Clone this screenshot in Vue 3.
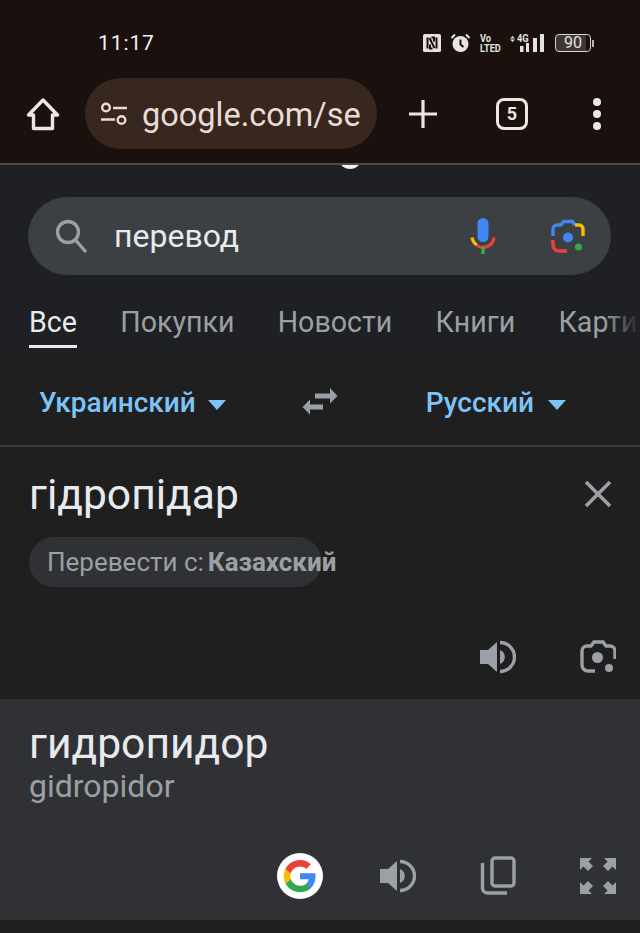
<script setup>
const tabs = ['Все', 'Покупки', 'Новости', 'Книги', 'Карти']
</script>

<template>
  <div class="phone">
    <header class="chrome">
      <div class="status">
        <span class="time">11:17</span>
        <div class="status-icons">
          <svg width="18" height="18" viewBox="0 0 18 18">
            <rect width="18" height="18" rx="1.5" fill="#e4e1df" />
            <path d="M4.5 3.5v11M13.5 3.500v11M6.500 4l5 10M8.500 3.500h2.500v4M9.500 14.500H7v-4" stroke="#1a110e" stroke-width="2" fill="none" />
          </svg>
          <svg width="21" height="20" viewBox="0 0 21 20">
            <circle cx="10.500" cy="11" r="8" fill="#e8e6e3" />
            <path d="M10.500 6.500V11.500l3 2.500" stroke="#1a110e" stroke-width="2" fill="none" />
            <path d="M1.500 5 5 1.500M19.500 5 16 1.500" stroke="#e8e6e3" stroke-width="2" />
          </svg>
          <div class="volte">
            <span>Vo</span>
            <span>LTED</span>
          </div>
          <div class="signal">
            <span class="net">4G</span>
            <svg width="35" height="18" viewBox="0 0 35 18">
              <path d="M0 4.500h5L2.500 2ZM0 5.500h5L2.500 8Z" fill="#e4e1df" />
              <rect x="10" y="12" width="3.500" height="6" fill="#e4e1df" />
              <rect x="16" y="9" width="3" height="9" fill="#e4e1df" />
              <rect x="23" y="4" width="4" height="14" fill="#e4e1df" />
              <rect x="30" y="0" width="4" height="18" fill="#e4e1df" />
            </svg>
          </div>
          <div class="battery">
            <div class="cell"><span>90</span></div>
            <i class="nub"></i>
          </div>
        </div>
      </div>
      <div class="toolbar">
        <svg width="36" height="36" viewBox="0 0 36 36">
          <path d="M18 4 3.500 19H8.500V32.500H27.500V19H32.500Z" fill="none" stroke="#efe6e2" stroke-width="3.400" stroke-linejoin="round" />
        </svg>
        <div class="url">
          <svg width="28" height="24" viewBox="0 0 28 24">
            <g fill="none" stroke="#e8dcd7" stroke-width="2.400">
              <circle cx="6" cy="5.500" r="3.800" />
              <path d="M13 6h14M1 17.500h14" />
              <circle cx="21.500" cy="18" r="3.800" />
            </g>
          </svg>
          <span class="url-text">google.com/se</span>
        </div>
        <svg class="plus" width="30" height="30" viewBox="0 0 30 30">
          <path d="M15 1v28M1 15h28" stroke="#efe6e2" stroke-width="3.200" />
        </svg>
        <div class="tab-count">5</div>
        <div class="dots"><i></i><i></i><i></i></div>
      </div>
    </header>

    <section class="search-area">
      <i class="peek"></i>
      <div class="search">
        <svg width="34" height="38" viewBox="0 0 34 38">
          <circle cx="14" cy="15" r="10.500" fill="none" stroke="#9aa0a6" stroke-width="3.400" />
          <path d="M21.500 23 32 35" stroke="#9aa0a6" stroke-width="3.400" />
        </svg>
        <span class="query">перевод</span>
        <svg class="mic" width="26" height="36" viewBox="0 0 26 36">
          <rect x="7.500" y="0" width="11" height="24" rx="5.500" fill="#4285f4" />
          <path d="M2 19.500a11 11 0 0 0 5 7.500" fill="none" stroke="#fbbc04" stroke-width="3.200" />
          <path d="M7 27.500a11 11 0 0 0 17-8" fill="none" stroke="#ea4335" stroke-width="3.200" />
          <rect x="11.300" y="29" width="3.400" height="7" fill="#34a853" />
        </svg>
        <svg class="lens" width="34" height="34" viewBox="0 0 34 34">
          <path d="M2 17V10a4 4 0 0 1 4-4h4l2.500-3.500h9L24 6" fill="none" stroke="#4285f4" stroke-width="3.400" stroke-linejoin="round" />
          <path d="M24 6h4a4 4 0 0 1 4 4v7" fill="none" stroke="#fbbc04" stroke-width="3.400" />
          <path d="M2 21v5a6 6 0 0 0 6 6h8" fill="none" stroke="#ea4335" stroke-width="3.400" />
          <circle cx="17" cy="18.500" r="5" fill="#4285f4" />
          <circle cx="27.500" cy="28" r="3.500" fill="#34a853" />
        </svg>
      </div>
      <nav class="tabs">
        <span v-for="(t, i) in tabs" :key="t" :class="['tab', { active: i === 0 }]">{{ t }}</span>
        <i class="fade"></i>
      </nav>
    </section>

    <section class="source">
      <div class="langs">
        <div class="lang first">Украинский <i class="caret"></i></div>
        <svg class="swap" width="36" height="28" viewBox="0 0 36 28">
          <g fill="#9aa0a6">
            <rect x="13" y="6.500" width="16" height="5" />
            <path d="M28 1 35.500 9 28 16.500Z" />
            <rect x="7" y="17.500" width="14" height="5" />
            <path d="M8 12.500 .500 20 8 27.500Z" />
          </g>
        </svg>
        <div class="lang second">Русский <i class="caret"></i></div>
      </div>
      <div class="input-block">
        <div class="word-row">
          <span class="word">гідропідар</span>
          <svg width="28" height="28" viewBox="0 0 28 28">
            <path d="M2 2 26 26M26 2 2 26" stroke="#9aa0a6" stroke-width="3.600" />
          </svg>
        </div>
        <div class="detect">
          <span class="detect-text">Перевести с:<b>Казахский</b></span>
        </div>
        <div class="actions source-actions">
          <svg width="36" height="36" viewBox="0 0 36 36">
            <path d="M0 11h8L17 3v30L8 25H0Z" fill="#9aa0a6" />
            <path d="M20 11a7.500 7.500 0 0 1 0 14Z" fill="#9aa0a6" />
            <path d="M20 3.500a14.500 14.500 0 0 1 0 29" fill="none" stroke="#9aa0a6" stroke-width="3.400" />
          </svg>
          <svg width="36" height="36" viewBox="0 0 36 36">
            <path d="M15 32H8a6 6 0 0 1-6-6V12a5 5 0 0 1 5-5h4l3-4h9l3 4h4a5 5 0 0 1 5 5v8" fill="none" stroke="#9aa0a6" stroke-width="3.400" />
            <circle cx="17.500" cy="18.500" r="5.500" fill="#9aa0a6" />
            <circle cx="29" cy="29" r="4" fill="#9aa0a6" />
          </svg>
        </div>
      </div>
    </section>

    <section class="result">
      <div class="word">гидропидор</div>
      <div class="translit">gidropidor</div>
      <div class="actions result-actions">
        <div class="g-badge">
          <svg width="34" height="34" viewBox="0 0 48 48">
            <path fill="#4285f4" d="M46 24.500c0-1.600-.1-3.100-.4-4.500H24v8.700h12.400c-.5 2.900-2.100 5.300-4.600 6.900v5.700h7.400c4.300-4 6.800-9.900 6.800-16.800z" />
            <path fill="#34a853" d="M24 47c6.200 0 11.400-2.100 15.200-5.600l-7.400-5.700c-2.100 1.400-4.700 2.200-7.800 2.200-6 0-11.100-4-12.900-9.500H3.500v5.900C7.300 41.800 15 47 24 47z" />
            <path fill="#fbbc05" d="M11.100 28.900c-.5-1.400-.7-2.900-.7-4.400s.3-3 .7-4.400v-5.900H3.500C1.900 17.300 1 20.800 1 24.500s.9 7.200 2.500 10.300z" />
            <path fill="#ea4335" d="M24 10.600c3.400 0 6.400 1.200 8.800 3.400l6.600-6.600C35.400 3.700 30.200 1.500 24 1.500 15 1.500 7.300 6.700 3.500 14.200l7.600 5.900C12.900 14.600 18 10.600 24 10.600z" />
          </svg>
        </div>
        <svg width="36" height="36" viewBox="0 0 36 36">
          <path d="M0 11h8L17 3v30L8 25H0Z" fill="#9aa0a6" />
          <path d="M20 11a7.500 7.500 0 0 1 0 14Z" fill="#9aa0a6" />
          <path d="M20 3.500a14.500 14.500 0 0 1 0 29" fill="none" stroke="#9aa0a6" stroke-width="3.400" />
        </svg>
        <svg width="36" height="40" viewBox="0 0 36 40">
          <path d="M2.500 7V32a5 5 0 0 0 5 5H27" fill="none" stroke="#9aa0a6" stroke-width="3.400" />
          <rect x="12" y="2" width="22" height="28" rx="3" fill="none" stroke="#9aa0a6" stroke-width="3.400" />
        </svg>
        <svg width="36" height="36" viewBox="0 0 36 36">
          <g fill="#9aa0a6">
            <path d="M0 0h12L8.500 3.500 13 8l-5 5-4.500-4.500L0 12Z" />
            <path d="M36 0H24l3.500 3.500L23 8l5 5 4.500-4.500L36 12Z" />
            <path d="M0 36h12L8.500 32.500 13 28l-5-5-4.500 4.500L0 24Z" />
            <path d="M36 36H24l3.500-3.500L23 28l5-5 4.500 4.500L36 24Z" />
          </g>
        </svg>
      </div>
    </section>
  </div>
</template>

<style>
body {
  margin: 0;
  background: #1f1f1f;
}
</style>

<style scoped>
.phone {
  width: 640px;
  height: 933px;
  overflow: hidden;
  background: #1f1f1f;
  font-family: Roboto, sans-serif;
}

.chrome {
  height: 165px;
  box-sizing: border-box;
  background: #1a110e;
  border-bottom: 2px solid #4b4b4b;
}

.status {
  display: flex;
  justify-content: space-between;
  align-items: center;
  height: 78px;
  padding: 8px 46px 0 98px;
  box-sizing: border-box;
}

.time {
  font-size: 21px;
  color: #f3f0ee;
  letter-spacing: 0.9px;
}

.status-icons {
  display: flex;
  align-items: center;
  gap: 9px;
  color: #e4e1df;
}

.volte {
  display: flex;
  flex-direction: column;
  width: 21px;
  font-size: 11.500px;
  font-weight: 700;
  line-height: 10px;
}

.volte span {
  width: max-content;
  transform: scaleX(0.8);
  transform-origin: left;
}

.signal {
  position: relative;
  width: 35px;
  height: 18px;
}

.net {
  position: absolute;
  left: 7px;
  top: -1px;
  font-size: 11px;
  font-weight: 700;
  line-height: 11px;
  transform: scaleX(0.85);
  transform-origin: left;
}

.battery {
  display: flex;
  align-items: center;
  margin-left: 1px;
}

.cell {
  width: 36px;
  height: 18px;
  box-sizing: border-box;
  border: 1.500px solid #d8d4d1;
  border-radius: 4px;
  background: linear-gradient(90deg, #3a3735 88%, transparent 88%);
  font-size: 16px;
  line-height: 15px;
  text-align: center;
}

.nub {
  display: block;
  width: 2px;
  height: 7px;
  margin-left: 1px;
  background: #b9b5b2;
}

.toolbar {
  display: flex;
  align-items: center;
  height: 71px;
  padding-left: 25px;
  color: #efe6e2;
}

.url {
  display: flex;
  align-items: center;
  gap: 14px;
  width: 292px;
  height: 71px;
  margin-left: 24px;
  padding-left: 15px;
  box-sizing: border-box;
  border-radius: 36px;
  background: #38271f;
  font-size: 32.500px;
  color: #e8dcd7;
  white-space: nowrap;
}

.url-text {
  margin-top: 3px;
}

.plus {
  margin-left: 31px;
}

.tab-count {
  width: 32px;
  height: 32px;
  margin-left: 58px;
  box-sizing: border-box;
  border: 3px solid #efe6e2;
  border-radius: 8px;
  font-size: 18px;
  font-weight: 700;
  line-height: 26px;
  text-align: center;
}

.dots {
  display: flex;
  flex-direction: column;
  gap: 4px;
  margin-left: 65px;
}

.dots i {
  display: block;
  width: 8px;
  height: 8px;
  border-radius: 50%;
  background: #efe6e2;
}

.search-area {
  position: relative;
  height: 195px;
  overflow: hidden;
  background: #1f2023;
}

.peek {
  position: absolute;
  left: 340px;
  top: -12px;
  width: 20px;
  height: 16px;
  border-radius: 50%;
  background: #f2f2f2;
}

.search {
  position: absolute;
  left: 28px;
  right: 29px;
  top: 32px;
  height: 78px;
  display: flex;
  align-items: center;
  padding-left: 26px;
  border-radius: 39px;
  background: #3c4043;
}

.query {
  margin-left: 26px;
  font-size: 32px;
  color: #e8eaed;
}

.mic {
  margin-left: auto;
}

.lens {
  margin-left: 55px;
  margin-right: 26px;
}

.tabs {
  position: absolute;
  left: 29px;
  right: 0;
  top: 140px;
  display: flex;
  gap: 43.300px;
  overflow: hidden;
  height: 44px;
}

.tab {
  font-size: 28.600px;
  line-height: 34px;
  color: #9aa0a6;
  white-space: nowrap;
}

.tab.active {
  height: 43px;
  box-sizing: border-box;
  color: #e8eaed;
  border-bottom: 3px solid #e8eaed;
}

.fade {
  position: absolute;
  right: 0;
  top: 0;
  width: 36px;
  height: 40px;
  background: linear-gradient(90deg, rgba(31, 32, 35, 0), #1f2023);
}

.source {
  height: 339px;
}

.langs {
  height: 87px;
  border-bottom: 2px solid #3c3c3c;
  display: flex;
  align-items: center;
  box-sizing: border-box;
}

.lang {
  display: flex;
  align-items: center;
  font-size: 28px;
  font-weight: 500;
  color: #7cc4f8;
  white-space: pre;
}

.first {
  margin-left: 39px;
}

.second {
  margin-left: 88px;
}

.caret {
  display: block;
  margin: 5px 0 0 5px;
  border-left: 9.500px solid transparent;
  border-right: 9.500px solid transparent;
  border-top: 10px solid #7cc4f8;
}

.second .caret {
  margin-left: 7px;
}

.swap {
  margin: -4px 0 0 76px;
}

.input-block {
  padding: 0 28px 0 29px;
}

.word-row {
  display: flex;
  justify-content: space-between;
  align-items: center;
  height: 94px;
}

.word {
  font-size: 42.600px;
  line-height: 48px;
  color: #e8eaed;
}

.detect {
  width: 293px;
  height: 50px;
  margin-top: -4px;
  border-radius: 25px;
  background: #303134;
  font-size: 26px;
  line-height: 50px;
  color: #9aa0a6;
  white-space: nowrap;
}

.detect-text {
  margin-left: 18px;
}

.detect b {
  margin-left: 4px;
  font-weight: 700;
}

.actions {
  display: flex;
  align-items: center;
  justify-content: flex-end;
  gap: 64px;
  margin-right: -4px;
}

.source-actions {
  margin-top: 52px;
}

.result {
  height: 221px;
  padding: 19px 28px 0 29px;
  box-sizing: border-box;
  background: #303134;
}

.result .word {
  line-height: 50px;
}

.translit {
  font-size: 32px;
  line-height: 36px;
  color: #9aa0a6;
}

.result-actions {
  margin-top: 49px;
}

.g-badge {
  display: flex;
  align-items: center;
  justify-content: center;
  width: 46px;
  height: 46px;
  margin-right: -7px;
  border-radius: 50%;
  background: #fff;
}
</style>
